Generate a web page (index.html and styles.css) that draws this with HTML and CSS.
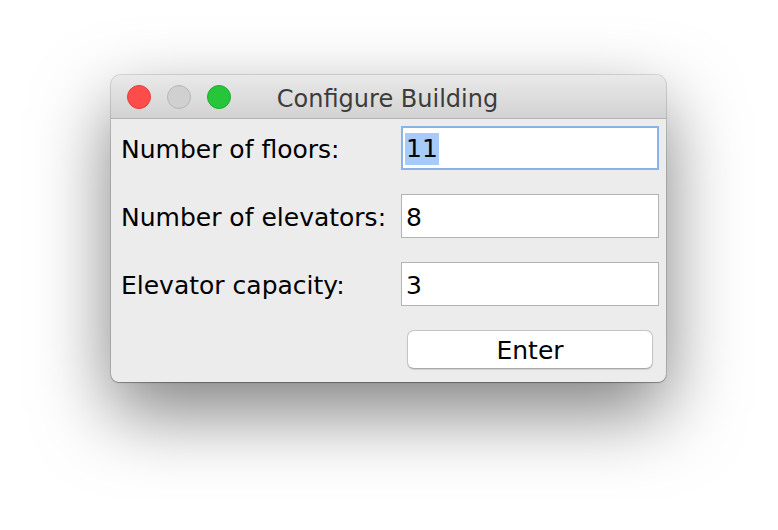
FILE: index.html
```html
<!DOCTYPE html>
<html>
<head>
<meta charset="utf-8">
<link rel="stylesheet" href="styles.css">
</head>
<body>
<div class="window">
  <div class="titlebar">
    <div class="lights">
      <span class="light red"></span>
      <span class="light gray"></span>
      <span class="light green"></span>
    </div>
    <div class="title">Configure Building</div>
  </div>
  <div class="content">
    <div class="row">
      <label class="label">Number of floors:</label>
      <div class="field focused"><span class="sel">11</span></div>
    </div>
    <div class="row">
      <label class="label">Number of elevators:</label>
      <div class="field">8</div>
    </div>
    <div class="row">
      <label class="label">Elevator capacity:</label>
      <div class="field">3</div>
    </div>
    <div class="actions">
      <button class="btn">Enter</button>
    </div>
  </div>
</div>
</body>
</html>
```

FILE: styles.css
```css
html, body {
  margin: 0;
  padding: 0;
  background: #ffffff;
  width: 778px;
  height: 530px;
  overflow: hidden;
}
body {
  padding-top: 75px;
  padding-left: 111px;
  box-sizing: border-box;
  font-family: "DejaVu Sans", "Liberation Sans", sans-serif;
}
.window {
  width: 555px;
  height: 307px;
  border-radius: 10px 10px 8px 8px;
  background: #ececec;
  box-shadow: 0 1px 1px rgba(0,0,0,0.25), 0 0 0 1px rgba(0,0,0,0.12), 0 30px 75px rgba(0,0,0,0.5);
  overflow: hidden;
  display: flex;
  flex-direction: column;
}
.titlebar {
  height: 43px;
  flex: none;
  background: linear-gradient(#e9e9e9, #d2d2d2);
  border-bottom: 1px solid #b4b4b4;
  display: flex;
  align-items: center;
}
.lights {
  display: flex;
  gap: 16px;
  padding-left: 16px;
  padding-top: 1px;
}
.light {
  width: 24px;
  height: 24px;
  border-radius: 50%;
  box-sizing: border-box;
}
.red { background: #fd4c4a; border: 1px solid #e0403c; }
.gray { background: #d0d0d0; border: 1px solid #b6b6b6; }
.green { background: #27c63a; border: 1px solid #1daa2d; }
.title {
  flex: 1;
  text-align: center;
  font-size: 24px;
  color: #3c3c3c;
  margin-left: -122px;
  padding-top: 4px;
}
.content {
  flex: 1;
  padding: 7px 7px 0 10px;
  display: flex;
  flex-direction: column;
  gap: 24px;
}
.row {
  display: flex;
  align-items: center;
  height: 44px;
}
.label {
  width: 280px;
  font-size: 25px;
  color: #000;
  padding-top: 2px;
}
.field {
  width: 258px;
  height: 44px;
  box-sizing: border-box;
  background: #fff;
  border: 1px solid #b3b3b3;
  font-size: 25px;
  color: #000;
  display: flex;
  align-items: center;
  padding-left: 4px;
  padding-top: 2px;
}
.field.focused {
  border: 2px solid #8cb3e8;
  padding-left: 2px;
}
.sel {
  background: #a6cbfb;
  padding: 2px 1px;
  line-height: 28px;
}
.actions {
  display: flex;
  padding-left: 286px;
}
.btn {
  width: 246px;
  height: 39px;
  border: 1px solid #c4c4c4;
  border-bottom-color: #a9a9a9;
  border-radius: 7px;
  background: #ffffff;
  font-family: "DejaVu Sans", "Liberation Sans", sans-serif;
  font-size: 25px;
  color: #000;
  padding: 2px 0 0 0;
  box-shadow: 0 1px 1px rgba(0,0,0,0.12);
}
```
